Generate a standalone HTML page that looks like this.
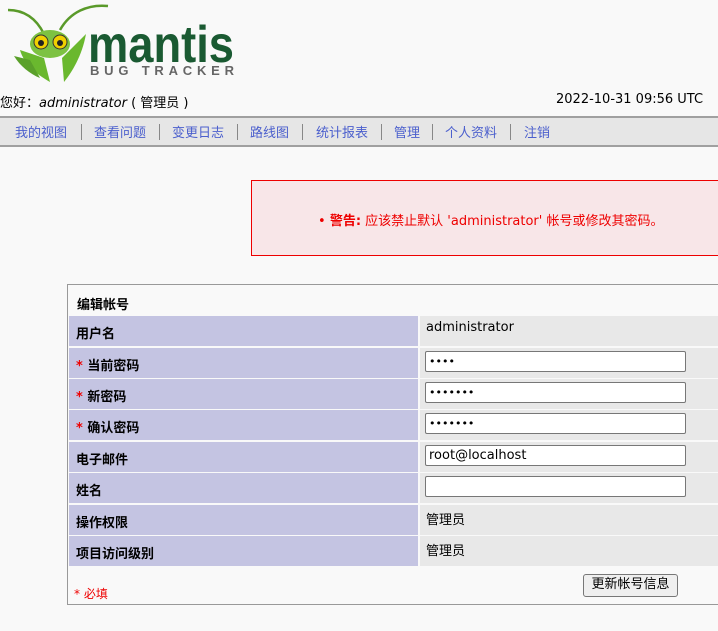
<!DOCTYPE html>
<html><head><meta charset="utf-8"><style>
body{margin:0;width:718px;height:631px;background:#f9f9f9;font-family:"DejaVu Sans","Noto Sans CJK SC",sans-serif;font-size:13px;color:#000;position:relative;overflow:hidden}
.a{position:absolute}
.nav{left:0;top:116px;width:718px;height:27px;background:#e6e6e6;border-top:2px solid #a0a0a0;border-bottom:2px solid #a0a0a0}
.nav span{position:absolute;top:4px;color:#4b5fcd;font-size:13px}
.nav i{position:absolute;top:6px;width:1px;height:16px;background:#888}
.warn{left:251px;top:180px;width:480px;height:74px;background:#f8e6e8;border:1px solid #e00;color:#e00}
.tbl{left:67px;top:284px;width:660px;height:319px;border:1px solid #999;border-right:none;background:#f9f9f9}
.row{position:absolute;left:0;height:30px}
.l{position:absolute;left:1px;width:349px;height:30px;background:#c4c4e2;font-weight:bold}
.l span{position:absolute;left:7px;top:7px}
.v{position:absolute;left:352px;width:320px;height:30px;background:#e8e8e8}
.v span{position:absolute;left:6px;top:4px}
.in{position:absolute;left:5px;top:3px;background:#fff;border:1px solid #777;border-radius:2px;font-size:11px;line-height:19px;padding-left:3px;box-sizing:border-box;width:261px;height:21px}
.st{color:#e00}
</style></head><body>
<svg class="a" style="left:0;top:0" width="240" height="85">
<path d="M44 34 C36 18 24 10 8 10" stroke="#5a9a2a" stroke-width="2.5" fill="none"/>
<path d="M60 30 C70 12 88 4 108 6" stroke="#5a9a2a" stroke-width="2.5" fill="none"/>
<path d="M20 50 C24 64 36 74 50 82 L44 58Z" fill="#6ab82e"/>
<path d="M86 34 C82 56 72 72 64 82 L62 58Z" fill="#6ab82e"/>
<path d="M14 56 C20 66 30 74 40 78 L30 60Z" fill="#5aa02a"/>
<ellipse cx="50" cy="44" rx="20" ry="14" fill="#7dc242"/>
<circle cx="41" cy="42" r="7" fill="#f0d000" stroke="#333"/><circle cx="60" cy="42" r="7" fill="#f0d000" stroke="#333"/>
<circle cx="41" cy="43" r="3" fill="#222"/><circle cx="60" cy="43" r="3" fill="#222"/>
<text x="88" y="62" font-family="Liberation Sans" font-weight="bold" font-size="52" fill="#1a5a32" textLength="146" lengthAdjust="spacingAndGlyphs">mantis</text>
<text x="90" y="75" font-family="Liberation Sans" font-weight="bold" font-size="13" fill="#666" textLength="144" lengthAdjust="spacing">BUG TRACKER</text>
</svg>
<div class="a" style="left:0;top:92px">您好：<i>administrator</i> ( 管理员 )</div>
<div class="a" style="left:556px;top:92px">2022-10-31 09:56 UTC</div>
<div class="a nav">
<span style="left:15px">我的视图</span><i style="left:81px"></i>
<span style="left:94px">查看问题</span><i style="left:159px"></i>
<span style="left:172px">变更日志</span><i style="left:237px"></i>
<span style="left:250px">路线图</span><i style="left:302px"></i>
<span style="left:316px">统计报表</span><i style="left:381px"></i>
<span style="left:394px">管理</span><i style="left:432px"></i>
<span style="left:445px">个人资料</span><i style="left:510px"></i>
<span style="left:524px">注销</span>
</div>
<div class="a warn"><span class="a" style="left:66px;top:29px">• <b>警告:</b> 应该禁止默认 'administrator' 帐号或修改其密码。</span></div>
<div class="a tbl">
<div class="a" style="left:9px;top:9px;font-weight:bold">编辑帐号</div>
<div class="row" style="top:31px"><div class="l"><span>用户名</span></div><div class="v"><span>administrator</span></div></div>
<div class="row" style="top:63px"><div class="l"><span><b class="st">*</b> 当前密码</span></div><div class="v"><div class="in">••••</div></div></div>
<div class="row" style="top:94px"><div class="l"><span><b class="st">*</b> 新密码</span></div><div class="v"><div class="in">•••••••</div></div></div>
<div class="row" style="top:125px"><div class="l"><span><b class="st">*</b> 确认密码</span></div><div class="v"><div class="in">•••••••</div></div></div>
<div class="row" style="top:157px"><div class="l"><span>电子邮件</span></div><div class="v"><div class="in" style="font-size:13px">root@localhost</div></div></div>
<div class="row" style="top:188px"><div class="l"><span>姓名</span></div><div class="v"><div class="in"></div></div></div>
<div class="row" style="top:220px"><div class="l"><span>操作权限</span></div><div class="v"><span>管理员</span></div></div>
<div class="row" style="top:251px"><div class="l"><span>项目访问级别</span></div><div class="v"><span>管理员</span></div></div>
<div class="a" style="left:6px;top:300px;color:#e00;font-size:12px">* 必填</div>
<div class="a" style="left:515px;top:289px;width:93px;height:21px;border:1px solid #777;border-radius:3px;background:#efefef;text-align:center;line-height:20px">更新帐号信息</div>
</div>
</body></html>
